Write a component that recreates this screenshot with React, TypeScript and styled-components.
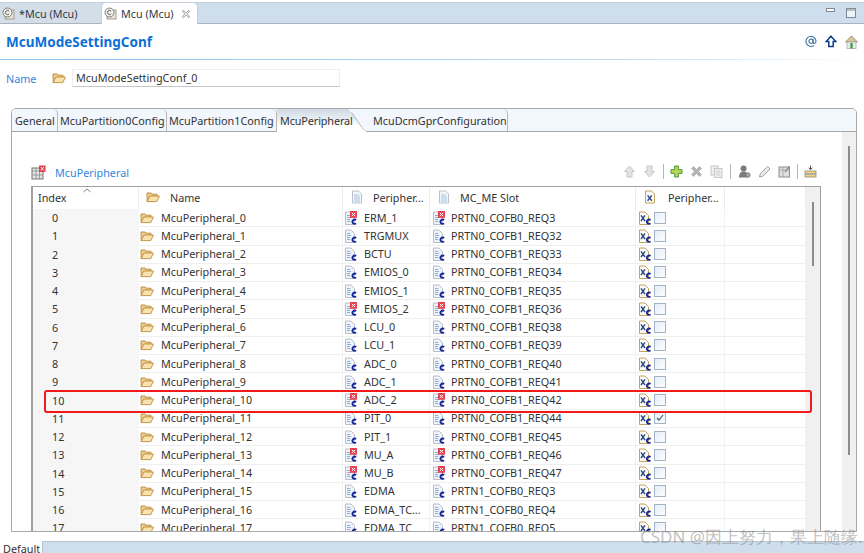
import styled, { createGlobalStyle } from "styled-components";

const GlobalStyle = createGlobalStyle`
    html, body {
        margin: 0;
        padding: 0;
        background: #fff;
    }
    body {
        font-family: "Noto Sans", "Open Sans", sans-serif;
        font-size: 10.8px;
        color: #333;
    }
`;

const Page = styled.div`
    position: relative;
    width: 864px;
    height: 553px;
    overflow: hidden;
    display: flex;
    flex-direction: column;
    background: #fff;
`;

const EditorTabs = styled.div`
    height: 22px;
    margin-top: 2px;
    box-sizing: border-box;
    border-top: 1px solid #c4cfdb;
    border-bottom: 1px solid #a9b4bf;
    background: #cfdeed;
    display: flex;
    align-items: stretch;
    flex-shrink: 0;
`;

const EditorTab = styled.div<{ $active?: boolean; $w: number }>`
    width: ${(p) => p.$w}px;
    display: flex;
    align-items: center;
    gap: 4px;
    padding-left: 2px;
    box-sizing: border-box;
    color: #2f3b47;
    font-size: 10.8px;
    margin-top: ${(p) => (p.$active ? "-1px" : "0")};
    margin-bottom: ${(p) => (p.$active ? "-1px" : "0")};
    margin-left: ${(p) => (p.$active ? "1px" : "0")};
    background: ${(p) => (p.$active ? "#fff" : "#d4dee8")};
    border-radius: ${(p) => (p.$active ? "5px 5px 0 0" : "0")};
    border: ${(p) => (p.$active ? "1px solid #c4cfdb" : "none")};
    border-bottom: none;
`;

const WindowButtons = styled.div`
    margin-left: auto;
    padding-right: 8px;
    display: flex;
    align-items: center;
    gap: 11px;
`;

const FormHeader = styled.div`
    height: 36px;
    box-sizing: border-box;
    flex-shrink: 0;
    display: flex;
    align-items: center;
    justify-content: space-between;
    padding: 0 6px 0 6px;
    border-bottom: 1px solid transparent;
    border-image: linear-gradient(90deg, #8fc2ee, #b9dbf5 70%, #fff) 1;
`;

const FormTitle = styled.div`
    color: #0b70d6;
    font-weight: 700;
    font-size: 13.5px;
`;

const HeaderIcons = styled.div`
    display: flex;
    align-items: center;
    gap: 8px;
`;

const NameRow = styled.div`
    height: 48px;
    flex-shrink: 0;
    display: flex;
    align-items: center;
    padding: 0 0 12px 6px;
    box-sizing: border-box;
`;

const NameLabel = styled.span`
    width: 46px;
    color: #2f86dc;
`;

const NameInput = styled.div`
    width: 268px;
    height: 18px;
    margin-left: 6px;
    padding-left: 3px;
    box-sizing: border-box;
    line-height: 15px;
    background: #fff;
    border: 1px solid #eee;
    border-bottom: 1px solid #c6c6c6;
    color: #333;
`;

const TabFolder = styled.div`
    margin: 0 7px 0 11px;
    height: 424px;
    flex-shrink: 0;
    box-sizing: border-box;
    border: 1px solid #a8a8a8;
    border-radius: 5px 5px 0 0;
    display: flex;
    flex-direction: column;
    overflow: hidden;
`;

const TabStrip = styled.div`
    height: 23px;
    box-sizing: border-box;
    flex-shrink: 0;
    display: flex;
    align-items: stretch;
    padding-left: 1px;
    background: #f2f7fd;
    border-bottom: 1px solid #a8a8a8;
`;

const FolderTab = styled.div<{ $w: number; $pad?: number }>`
    width: ${(p) => p.$w}px;
    box-sizing: border-box;
    display: flex;
    align-items: center;
    padding-left: ${(p) => p.$pad ?? 2}px;
    color: #333;
    white-space: nowrap;
    border-right: 1px solid #b8b8b8;
    border-radius: 0 5px 0 0;
`;

const ActiveFolderTab = styled.div`
    position: relative;
    width: 90px;
    box-sizing: border-box;
    display: flex;
    align-items: center;
    padding-left: 3px;
    color: #333;
    white-space: nowrap;
    letter-spacing: -0.1px;
    margin-bottom: -1px;
    background: linear-gradient(#cfd9e4, #e6ecf2 40%, #fff 72%);
    clip-path: polygon(0 0, 78% 0, 85% 22%, 96% 85%, 100% 100%, 0 100%);
`;

const TabCurve = styled.svg`
    position: absolute;
    right: 0;
    top: 0;
`;

const PanelBody = styled.div`
    flex: 1;
    min-height: 0;
    display: flex;
`;

const PanelMain = styled.div`
    width: 830px;
    flex-shrink: 0;
    display: flex;
    flex-direction: column;
    padding: 0 0 0 19px;
    box-sizing: border-box;
`;

const OuterScroll = styled.div`
    flex: 1;
    background: #f0f0f0;
    display: flex;
    justify-content: center;
    padding-top: 14px;
`;

const ScrollThumb = styled.div<{ $h: number }>`
    width: 2px;
    height: ${(p) => p.$h}px;
    background: #8c8c8c;
`;

const SectionBar = styled.div`
    height: 54px;
    flex-shrink: 0;
    padding-top: 33px;
    box-sizing: border-box;
    display: flex;
    align-items: flex-start;
    width: 789px;
`;

const SectionTitle = styled.span`
    margin-left: 9px;
    color: #2f86dc;
    line-height: 16px;
`;

const Toolbar = styled.div`
    margin-left: auto;
    display: flex;
    align-items: center;
    height: 13px;
    gap: 7px;
    padding-right: 3px;
`;

const ToolSep = styled.div<{ $trim?: string }>`
    width: 1px;
    height: 15px;
    background: #b5b5b5;
    margin: ${(p) => p.$trim ?? "0"};
`;

const TableBox = styled.div`
    width: 790px;
    flex: 1;
    min-height: 0;
    box-sizing: border-box;
    border: 1px solid #a0a0a0;
    border-bottom: none;
    border-left-width: 2px;
    display: flex;
    overflow: hidden;
`;

const TableMain = styled.div`
    flex: 1;
    min-width: 0;
`;

const TableScroll = styled.div`
    width: 14px;
    flex-shrink: 0;
    background: #f0f0f0;
    display: flex;
    justify-content: center;
    padding-top: 15px;
`;

const columns = "106px 204px 87px 206px 89px 81px";

const HeaderRow = styled.div`
    display: grid;
    grid-template-columns: ${columns};
    height: 22px;
    background: #fff;
`;

const HeaderCell = styled.div<{ $pad: number; $gap?: number }>`
    position: relative;
    display: flex;
    align-items: center;
    gap: ${(p) => p.$gap ?? 10}px;
    padding: 0 0 2px ${(p) => p.$pad}px;
    border-right: 1px solid #ececec;
    color: #333;
    white-space: nowrap;
`;

const SortCaret = styled.svg`
    position: absolute;
    left: 49px;
    top: 0;
`;

const Row = styled.div`
    display: grid;
    grid-template-columns: ${columns};
    height: 18.25px;
    line-height: 18px;
`;

const IndexCell = styled.div`
    padding-left: 19px;
    background: #f6f6f6;
    color: #333;
`;

const Cell = styled.div<{ $pad?: number; $gap?: number }>`
    display: flex;
    align-items: center;
    gap: ${(p) => p.$gap ?? 7}px;
    padding-left: ${(p) => p.$pad ?? 2}px;
    box-sizing: border-box;
    border-right: 1px solid #f2f2f2;
    border-bottom: 1px solid #efefef;
    color: #333;
    white-space: nowrap;
    overflow: hidden;
`;

const CheckBox = styled.div`
    width: 10px;
    height: 10px;
    border: 1px solid #a3b3c4;
    background: linear-gradient(135deg, #e6eef8, #fbfdff);
    display: flex;
    align-items: center;
    justify-content: center;
`;

const BottomBar = styled.div`
    margin-top: 9px;
    display: flex;
    align-items: stretch;
    flex: 1;
    padding-left: 3px;
`;

const BottomLabel = styled.div`
    width: 39px;
    line-height: 16px;
    color: #333;
`;

const BottomFill = styled.div`
    flex: 1;
    background: #cfdeed;
    border-top: 1px solid #b9c3cd;
    border-left: 1px solid #b9c3cd;
`;

const Highlight = styled.div`
    position: absolute;
    left: 44px;
    top: 390px;
    width: 768px;
    height: 23px;
    box-sizing: border-box;
    border: 2px solid #f01a1a;
    border-radius: 3px;
    pointer-events: none;
`;

const Watermark = styled.div`
    position: absolute;
    left: 640px;
    top: 527px;
    font-size: 17px;
    line-height: 20px;
    white-space: nowrap;
    color: rgba(130, 130, 130, 0.5);
    pointer-events: none;
`;

const Folder = () => (
    <svg width="14" height="14" viewBox="0 0 14 14" style={{ flexShrink: 0 }}>
        <path d="M1 3h4l1 1.2h5v2H4L1.2 11.5z" fill="#efcf8e" stroke="#bd9147" strokeWidth="1" />
        <path d="M3.8 6h9.6l-2.6 5.6H1.2z" fill="#f9e2ae" stroke="#c4964a" strokeWidth="1" />
    </svg>
);

const PlainDoc = () => (
    <svg width="12" height="14" viewBox="0 0 12 14" style={{ flexShrink: 0 }}>
        <path d="M1.5 1h6l3 3v9h-9z" fill="#f4f7fb" stroke="#b5b9c6" strokeWidth="0.9" />
        <path d="M3 5h5M3 7h6M3 9h6M3 11h6" stroke="#9dbbdc" strokeWidth="0.9" />
    </svg>
);

const XDoc = () => (
    <svg width="12" height="14" viewBox="0 0 12 14" style={{ flexShrink: 0 }}>
        <path d="M1.5 1h6l3 3v9h-9z" fill="#fbfaf4" stroke="#c2a35f" strokeWidth="1" />
        <path d="M3.6 5.4l4.2 5.4M7.8 5.4l-4.2 5.4" stroke="#27488a" strokeWidth="1.4" />
    </svg>
);

const ClassIcon = ({ error }: { error?: boolean }) => (
    <svg width="12" height="14" viewBox="0 0 12 14" style={{ flexShrink: 0 }}>
        <path d="M0.5 1H6L9.5 4.5V13.5H0.5z" fill="#eef2f9" stroke="#b4b8c5" strokeWidth="0.9" />
        <path d="M2 4.5h3M2 6.5h4M2 8.5h3M2 10.5h3" stroke="#7fa5d2" strokeWidth="0.9" />
        <path d="M11.2 8.9a2.5 2.1 0 1 0 0 3.6" fill="none" stroke="#12259a" strokeWidth="1.9" />
        {error && (
            <>
                <rect x="5" y="0" width="7" height="6.8" fill="#e5404f" />
                <path d="M6.8 1.8l3.4 3.2M10.2 1.8l-3.4 3.2" stroke="#fff" strokeWidth="1" />
            </>
        )}
    </svg>
);

const XClassIcon = () => (
    <svg width="12" height="14" viewBox="0 0 12 14" style={{ flexShrink: 0 }}>
        <path d="M0.5 1H6L9.5 4.5V13.5H0.5z" fill="#fbfaf4" stroke="#c2a35f" strokeWidth="1" />
        <path d="M2 4.4l4 5.6M6 4.4l-4 5.6" stroke="#27488a" strokeWidth="1.4" />
        <path d="M11.6 8.9a2.5 2.1 0 1 0 0 3.6" fill="none" stroke="#12259a" strokeWidth="1.9" />
    </svg>
);

const McuTabIcon = () => (
    <svg width="13" height="13" viewBox="0 0 13 13" style={{ flexShrink: 0 }}>
        <rect x="3" y="3" width="9" height="9" fill="#e8e4da" stroke="#8f8a80" strokeWidth="0.8" />
        <circle cx="5.5" cy="5.5" r="4.5" fill="#f1f1ee" stroke="#6f6f6a" strokeWidth="0.9" />
        <path d="M7.2 4.2a2.1 2.1 0 1 0 0 2.6" fill="none" stroke="#5b5b55" strokeWidth="1" />
    </svg>
);

const CloseIcon = () => (
    <svg width="10" height="10" viewBox="0 0 10 10" style={{ flexShrink: 0, marginLeft: 3 }}>
        <path d="M1.5 1.5l7 7M8.5 1.5l-7 7" stroke="#a4a9ae" strokeWidth="2.2" />
        <path d="M1.5 1.5l7 7M8.5 1.5l-7 7" stroke="#fff" strokeWidth="0.8" />
    </svg>
);

const MinIcon = () => (
    <svg width="9" height="5" viewBox="0 0 9 5" style={{ marginBottom: 5 }}>
        <rect x="0.5" y="0.5" width="8" height="3" fill="#fff" stroke="#7f8a94" />
    </svg>
);

const MaxIcon = () => (
    <svg width="10" height="10" viewBox="0 0 10 10">
        <rect x="0.5" y="0.5" width="9" height="9" fill="#eef3f8" stroke="#7f8a94" />
        <path d="M0.5 2h9" stroke="#7f8a94" />
    </svg>
);

const AtIcon = () => (
    <svg width="12" height="13" viewBox="0 0 12 13">
        <circle cx="6" cy="6.3" r="2.1" fill="none" stroke="#4f7fa6" strokeWidth="1.2" />
        <path d="M8.1 4v3.4c0 1.6 2.9 1.3 2.9-1.2a5 5 0 1 0-2 4.2" fill="none" stroke="#4f7fa6" strokeWidth="1.2" />
    </svg>
);

const UpIcon = () => (
    <svg width="12" height="13" viewBox="0 0 12 13">
        <path d="M6 1.2l4.8 5.3H8.2V11.5H3.8V6.5H1.2z" fill="#fff" stroke="#0c3f86" strokeWidth="1.5" />
    </svg>
);

const HomeIcon = () => (
    <svg width="13" height="14" viewBox="0 0 13 14">
        <path d="M6.5 1L12.5 7H0.5z" fill="#d9c79c" stroke="#9a7d49" strokeWidth="0.8" />
        <rect x="2" y="7" width="9" height="6.5" fill="#e6eef4" stroke="#a2acb2" strokeWidth="0.8" />
        <rect x="5.3" y="8" width="2.4" height="5.5" fill="#4f9a45" />
    </svg>
);

const TableIcon = () => (
    <svg width="15" height="15" viewBox="0 0 15 15" style={{ flexShrink: 0 }}>
        <rect x="1" y="3" width="11" height="11" fill="#e4e4e4" stroke="#777" strokeWidth="1" />
        <path d="M1 6h11M5 3v11M8.5 3v11M1 10h11" stroke="#8a8a8a" strokeWidth="0.8" />
        <rect x="8" y="0.5" width="6.5" height="6.5" fill="#e8414e" />
        <path d="M9.8 2l3 3.4M12.8 2l-3 3.4" stroke="#fff" strokeWidth="0.9" />
    </svg>
);

const ToolIcon = ({ kind }: { kind: string }) => {
    const grey = "#c6c6c6";
    return (
        <svg width="13" height="13" viewBox="0 0 13 13" style={{ flexShrink: 0 }}>
            {kind === "up" && <path d="M6.5 1L11.5 6.5H9V12H4V6.5H1.5z" fill="#e4e4e4" stroke={grey} />}
            {kind === "down" && <path d="M6.5 12L11.5 6.5H9V1H4V6.5H1.5z" fill="#e4e4e4" stroke={grey} />}
            {kind === "plus" && <path d="M4.6 1h3.8v3.6H12v3.8H8.4V12H4.6V8.4H1V4.6h3.6z" fill="#b9d65a" stroke="#4f9a3a" />}
            {kind === "del" && <path d="M1.5 3.5L3.5 1.5 6.5 4.5 9.5 1.5 11.5 3.5 8.5 6.5 11.5 9.5 9.5 11.5 6.5 8.5 3.5 11.5 1.5 9.5 4.5 6.5z" fill="#b4b4b4" stroke="#a6a6a6" strokeWidth="0.6" />}
            {kind === "copy" && (
                <>
                    <rect x="1" y="1" width="7" height="9" fill="#eee" stroke={grey} />
                    <rect x="4.5" y="3.5" width="7.5" height="9" fill="#f1f1f1" stroke={grey} />
                    <path d="M6 6h4.5M6 8h4.5M6 10h4.5" stroke={grey} strokeWidth="0.8" />
                </>
            )}
            {kind === "person" && (
                <>
                    <circle cx="5.6" cy="3.5" r="3" fill="#7c7c7c" />
                    <path d="M1 12.5c0-4.4 2-6 4.6-6s4.6 1.6 4.6 6z" fill="#7c7c7c" />
                    <circle cx="10" cy="10" r="2.2" fill="#a8a8a8" stroke="#6c6c6c" strokeWidth="0.7" />
                </>
            )}
            {kind === "pen" && <path d="M1.5 12l.8-3.2L9.6 1.5l2.4 2.4-7.3 7.3z" fill="#ededed" stroke="#9c9c9c" />}
            {kind === "grid" && (
                <>
                    <rect x="1" y="2" width="10.5" height="10" fill="#dedede" stroke="#8f8f8f" />
                    <path d="M1 5h10M5 2v10" stroke="#a5a5a5" strokeWidth="0.8" />
                    <path d="M7 7l4.5-5.5" stroke="#8a8a8a" strokeWidth="1.3" />
                </>
            )}
            {kind === "add" && (
                <>
                    <rect x="1" y="6" width="11" height="6" fill="#f3d184" stroke="#8f8f70" strokeWidth="0.8" />
                    <rect x="1" y="8.5" width="11" height="1" fill="#6b94c4" />
                    <path d="M6.5 0.5v4M4.7 2.7l1.8 2 1.8-2" fill="none" stroke="#555" strokeWidth="1" />
                </>
            )}
        </svg>
    );
};

type Peripheral = {
    name: string;
    slot: string;
    error?: boolean;
    checked?: boolean;
};

const rows: Peripheral[] = [
    { name: "ERM_1", slot: "PRTN0_COFB0_REQ3", error: true },
    { name: "TRGMUX", slot: "PRTN0_COFB1_REQ32" },
    { name: "BCTU", slot: "PRTN0_COFB1_REQ33" },
    { name: "EMIOS_0", slot: "PRTN0_COFB1_REQ34" },
    { name: "EMIOS_1", slot: "PRTN0_COFB1_REQ35" },
    { name: "EMIOS_2", slot: "PRTN0_COFB1_REQ36", error: true },
    { name: "LCU_0", slot: "PRTN0_COFB1_REQ38" },
    { name: "LCU_1", slot: "PRTN0_COFB1_REQ39" },
    { name: "ADC_0", slot: "PRTN0_COFB1_REQ40" },
    { name: "ADC_1", slot: "PRTN0_COFB1_REQ41" },
    { name: "ADC_2", slot: "PRTN0_COFB1_REQ42", error: true },
    { name: "PIT_0", slot: "PRTN0_COFB1_REQ44", checked: true },
    { name: "PIT_1", slot: "PRTN0_COFB1_REQ45" },
    { name: "MU_A", slot: "PRTN0_COFB1_REQ46", error: true },
    { name: "MU_B", slot: "PRTN0_COFB1_REQ47", error: true },
    { name: "EDMA", slot: "PRTN1_COFB0_REQ3" },
    { name: "EDMA_TC...", slot: "PRTN1_COFB0_REQ4" },
    { name: "EDMA_TC", slot: "PRTN1_COFB0_REQ5" },
];

const App = () => (
    <Page>
        <GlobalStyle />
        <EditorTabs>
            <EditorTab $w={100}>
                <McuTabIcon />
                *Mcu (Mcu)
            </EditorTab>
            <EditorTab $w={97} $active>
                <McuTabIcon />
                Mcu (Mcu)
                <CloseIcon />
            </EditorTab>
            <WindowButtons>
                <MinIcon />
                <MaxIcon />
            </WindowButtons>
        </EditorTabs>
        <FormHeader>
            <FormTitle>McuModeSettingConf</FormTitle>
            <HeaderIcons>
                <AtIcon />
                <UpIcon />
                <HomeIcon />
            </HeaderIcons>
        </FormHeader>
        <NameRow>
            <NameLabel>Name</NameLabel>
            <Folder />
            <NameInput>McuModeSettingConf_0</NameInput>
        </NameRow>
        <TabFolder>
            <TabStrip>
                <FolderTab $w={45}>General</FolderTab>
                <FolderTab $w={109}>McuPartition0Config</FolderTab>
                <FolderTab $w={110}>McuPartition1Config</FolderTab>
                <ActiveFolderTab>
                    McuPeripheral
                    <TabCurve width="20" height="23" viewBox="0 0 20 23">
                        <path d="M0 0.5c3 0 4 1 6 5l9 13c1.5 2 3 3.5 5 3.5" fill="none" stroke="#b0b0b0" />
                    </TabCurve>
                </ActiveFolderTab>
                <FolderTab $w={141} $pad={6}>McuDcmGprConfiguration</FolderTab>
            </TabStrip>
            <PanelBody>
                <PanelMain>
                    <SectionBar>
                        <TableIcon />
                        <SectionTitle>McuPeripheral</SectionTitle>
                        <Toolbar>
                            <ToolIcon kind="up" />
                            <ToolIcon kind="down" />
                            <ToolSep $trim="0 -1px 0 0" />
                            <ToolIcon kind="plus" />
                            <ToolIcon kind="del" />
                            <ToolIcon kind="copy" />
                            <ToolSep />
                            <ToolIcon kind="person" />
                            <ToolIcon kind="pen" />
                            <ToolIcon kind="grid" />
                            <ToolSep $trim="0 -1px" />
                            <ToolIcon kind="add" />
                        </Toolbar>
                    </SectionBar>
                    <TableBox>
                        <TableMain>
                            <HeaderRow>
                                <HeaderCell $pad={5}>
                                    Index
                                    <SortCaret width="10" height="6" viewBox="0 0 10 6">
                                        <path d="M1.5 5L5 2l3.5 3" fill="none" stroke="#888" strokeWidth="1" />
                                    </SortCaret>
                                </HeaderCell>
                                <HeaderCell $pad={7}>
                                    <Folder />
                                    Name
                                </HeaderCell>
                                <HeaderCell $pad={8}>
                                    <PlainDoc />
                                    Peripher...
                                </HeaderCell>
                                <HeaderCell $pad={8}>
                                    <PlainDoc />
                                    MC_ME Slot
                                </HeaderCell>
                                <HeaderCell $pad={8} $gap={12}>
                                    <XDoc />
                                    Peripher...
                                </HeaderCell>
                                <HeaderCell $pad={0} />
                            </HeaderRow>
                            {rows.map((row, i) => (
                                <Row key={row.slot}>
                                    <IndexCell>{i}</IndexCell>
                                    <Cell $pad={1}>
                                        <Folder />
                                        McuPeripheral_{i}
                                    </Cell>
                                    <Cell>
                                        <ClassIcon error={row.error} />
                                        {row.name}
                                    </Cell>
                                    <Cell $pad={3} $gap={6}>
                                        <ClassIcon error={row.error} />
                                        {row.slot}
                                    </Cell>
                                    <Cell $pad={3} $gap={3}>
                                        <XClassIcon />
                                        <CheckBox>
                                            {row.checked && (
                                                <svg width="8" height="8" viewBox="0 0 8 8">
                                                    <path d="M1 4l2 2 4-5" fill="none" stroke="#4a5a6a" strokeWidth="1.2" />
                                                </svg>
                                            )}
                                        </CheckBox>
                                    </Cell>
                                    <Cell />
                                </Row>
                            ))}
                        </TableMain>
                        <TableScroll>
                            <ScrollThumb $h={64} />
                        </TableScroll>
                    </TableBox>
                </PanelMain>
                <OuterScroll>
                    <ScrollThumb $h={309} />
                </OuterScroll>
            </PanelBody>
        </TabFolder>
        <BottomBar>
            <BottomLabel>Default</BottomLabel>
            <BottomFill />
        </BottomBar>
        <Highlight />
        <Watermark>CSDN @因上努力，果上随缘.</Watermark>
    </Page>
);

export default App;
